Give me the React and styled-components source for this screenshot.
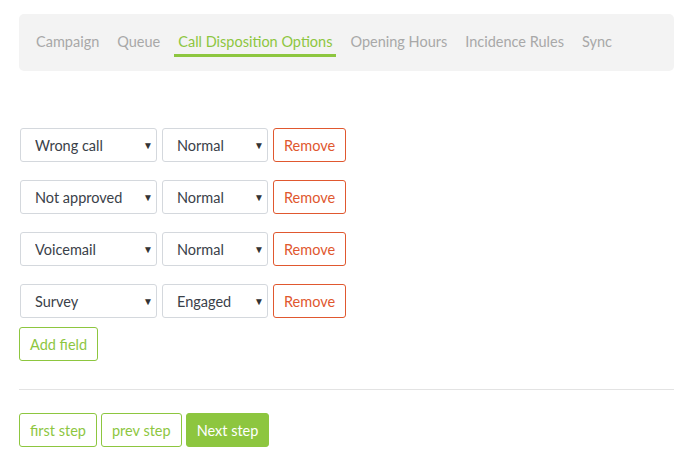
import React from "react";
import styled, { createGlobalStyle } from "styled-components";

const GREEN = "#8dc63f";
const FONT = `"Lato", "Open Sans", "Liberation Sans", sans-serif`;

const Global = createGlobalStyle`
  html, body { margin: 0; padding: 0; background: #fff; }
  body { font-family: ${FONT}; }
  * { box-sizing: border-box; }
`;

const Page = styled.div`
  padding: 14px 13px 0 19px;
  width: 687px;
`;

const TabBar = styled.nav`
  height: 57px;
  background: #f3f3f3;
  border-radius: 5px;
  display: flex;
  align-items: stretch;
  gap: 10px;
  padding: 0 13px;
`;

const Tab = styled.a`
  display: flex;
  align-items: center;
  padding: 0 4px 2px;
  font-size: 14.5px;
  color: ${(p) => (p.$active ? GREEN : "#a8a8a8")};
  text-decoration: none;
  position: relative;
  cursor: pointer;
  &::after {
    content: "";
    display: ${(p) => (p.$active ? "block" : "none")};
    position: absolute;
    left: 0;
    right: 0;
    top: 40px;
    height: 3px;
    background: ${GREEN};
  }
`;

const Fields = styled.div`
  margin-top: 57px;
  display: flex;
  flex-direction: column;
  gap: 18px;
`;

const Row = styled.div`
  display: flex;
  gap: 5px;
  padding-left: 1px;
`;

const SelectWrap = styled.div`
  position: relative;
  width: ${(p) => p.$w}px;
  height: 34px;
`;

const Select = styled.select`
  appearance: none;
  -webkit-appearance: none;
  width: 100%;
  height: 100%;
  border: 1px solid #d4d8dd;
  border-radius: 3px;
  background: #fff;
  padding: 0 20px 0 14px;
  font-family: ${FONT};
  font-size: 14.5px;
  color: #3a4149;
  outline: none;
`;

const Arrow = styled.span`
  position: absolute;
  right: 4px;
  top: 50%;
  transform: translateY(-50%);
  font-size: 10px;
  color: #333;
  pointer-events: none;
`;

const Button = styled.button`
  height: 34px;
  padding: 0 ${(p) => p.$px || 10}px;
  border-radius: 3px;
  font-family: ${FONT};
  font-size: 14.5px;
  cursor: pointer;
  border: 1px solid ${(p) => p.$color};
  background: ${(p) => (p.$solid ? p.$color : "#fff")};
  color: ${(p) => (p.$solid ? "#fff" : p.$color)};
`;

const AddRow = styled.div`
  margin-top: 9px;
  display: flex;
`;

const Divider = styled.hr`
  margin: 28px 0 0;
  border: none;
  border-top: 1px solid #e3e3e3;
`;

const Footer = styled.div`
  margin-top: 23px;
  display: flex;
  gap: 4px;
`;

const tabs = [
  "Campaign",
  "Queue",
  "Call Disposition Options",
  "Opening Hours",
  "Incidence Rules",
  "Sync",
];

const rows = [
  ["Wrong call", "Normal"],
  ["Not approved", "Normal"],
  ["Voicemail", "Normal"],
  ["Survey", "Engaged"],
];

function Dropdown({ w, value, options }) {
  return (
    <SelectWrap $w={w}>
      <Select defaultValue={value}>
        {options.map((o) => (
          <option key={o}>{o}</option>
        ))}
      </Select>
      <Arrow>▼</Arrow>
    </SelectWrap>
  );
}

export default function App() {
  return (
    <>
      <Global />
      <Page>
        <TabBar>
          {tabs.map((t, i) => (
            <Tab key={t} $active={i === 2}>
              {t}
            </Tab>
          ))}
        </TabBar>
        <Fields>
          {rows.map(([a, b], i) => (
            <Row key={i}>
              <Dropdown
                w={137}
                value={a}
                options={["Wrong call", "Not approved", "Voicemail", "Survey"]}
              />
              <Dropdown w={106} value={b} options={["Normal", "Engaged"]} />
              <Button $color="#e0582f">Remove</Button>
            </Row>
          ))}
        </Fields>
        <AddRow>
          <Button $color={GREEN}>Add field</Button>
        </AddRow>
        <Divider />
        <Footer>
          <Button $color={GREEN}>first step</Button>
          <Button $color={GREEN}>prev step</Button>
          <Button $color={GREEN} $solid>
            Next step
          </Button>
        </Footer>
      </Page>
    </>
  );
}
